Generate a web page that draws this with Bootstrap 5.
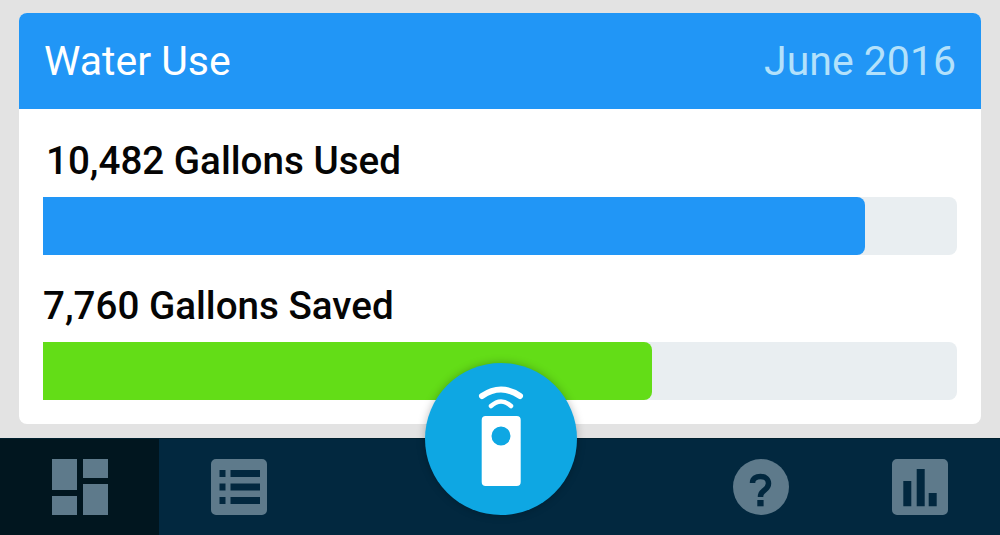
<!DOCTYPE html>
<html lang="en">
<head>
<meta charset="UTF-8">
<title>Water Use</title>
<link href="https://cdn.jsdelivr.net/npm/bootstrap@5.3.0/dist/css/bootstrap.min.css" rel="stylesheet">
<style>
  html, body { height: 100%; }
  body {
    background: #e3e3e3;
    font-family: Roboto, "Liberation Sans", sans-serif;
    overflow: hidden;
  }
  .app-screen { height: 535px; }
  .content-area { padding: 13px 19px 14px; }
  .usage-card { border: 0; border-radius: 8px; height: 411px; overflow: hidden; }
  .usage-head {
    background: #2196f6;
    height: 96px;
    padding: 0 25px;
    font-size: 41px;
    line-height: 96px;
    border: 0;
    border-radius: 0;
  }
  .usage-month { color: #b3e1fb; }
  .usage-body { padding: 28px 24px 0; }
  .usage-label { font-size: 38.6px; font-weight: 500; line-height: 48px; color: #050505; margin-bottom: 12px; }
  .label-first { padding-left: 3px; }
  .usage-track { height: 58px; background: #e9eef1; border-radius: 0 8px 8px 0; margin-bottom: 27px; }
  .usage-fill { border-radius: 0 8px 8px 0; }
  .fill-blue { background: #2196f6; }
  .fill-green { background: #63dd17; }
  .tab-bar { height: 97px; background: #02283f; border-top: 1px solid #01202f; }
  .tab-item { width: 159px; padding-bottom: 1px; }
  .tab-item.is-active { background: #01161f; }
  .tab-item svg { width: 56px; height: 56px; fill: #5e7a8b; }
  .tab-group-end { margin-right: 1px; }
  .remote-btn {
    left: 425px;
    top: 363px;
    width: 152px;
    height: 152px;
    background: #0ea7e3;
    box-shadow: 0 0 8px rgba(0, 0, 0, .25);
  }
</style>
</head>
<body>
<div class="app-screen position-relative d-flex flex-column">
  <div class="content-area">
    <div class="card usage-card">
      <div class="card-header usage-head d-flex justify-content-between text-white">
        <span>Water Use</span>
        <span class="usage-month">June 2016</span>
      </div>
      <div class="usage-body">
        <div class="usage-label label-first">10,482 Gallons Used</div>
        <div class="progress usage-track">
          <div class="progress-bar usage-fill fill-blue" style="width: 89.9%"></div>
        </div>
        <div class="usage-label">7,760 Gallons Saved</div>
        <div class="progress usage-track">
          <div class="progress-bar usage-fill fill-green" style="width: 66.6%"></div>
        </div>
      </div>
    </div>
  </div>
  <nav class="tab-bar d-flex justify-content-between">
    <div class="d-flex">
      <a class="tab-item is-active d-flex align-items-center justify-content-center" href="#">
        <svg viewBox="0 0 56 56"><rect x="0" y="0" width="25" height="31"/><rect x="31" y="0" width="25" height="19"/><rect x="31" y="25" width="25" height="31"/><rect x="0" y="37" width="25" height="19"/></svg>
      </a>
      <a class="tab-item d-flex align-items-center justify-content-center" href="#">
        <svg viewBox="0 0 56 56"><path fill-rule="evenodd" d="M5 0H51A5 5 0 0 1 56 5V51A5 5 0 0 1 51 56H5A5 5 0 0 1 0 51V5A5 5 0 0 1 5 0ZM8.500 11V18H14.500V11ZM19.500 11V18H49V11ZM8.500 24.500V31.500H14.500V24.500ZM19.500 24.500V31.500H49V24.500ZM8.500 38V45H14.500V38ZM19.500 38V45H49V38Z"/></svg>
      </a>
    </div>
    <div class="d-flex tab-group-end">
      <a class="tab-item d-flex align-items-center justify-content-center" href="#">
        <svg viewBox="0 0 56 56">
          <circle cx="28" cy="28" r="28"/>
          <path d="M19.500 24C19.500 19.500 23 17.500 27.500 17.500C32.500 17.500 35.500 20.500 35.500 24.500C35.500 29 32 30.500 30 32.500C28 34 27.500 35.500 27.500 38" fill="none" stroke="#02283f" stroke-width="5.500"/>
          <rect x="24.300" y="41" width="6.300" height="6.300" fill="#02283f"/>
        </svg>
      </a>
      <a class="tab-item d-flex align-items-center justify-content-center" href="#">
        <svg viewBox="0 0 56 56"><path fill-rule="evenodd" d="M5 0H51A5 5 0 0 1 56 5V51A5 5 0 0 1 51 56H5A5 5 0 0 1 0 51V5A5 5 0 0 1 5 0ZM11.300 22V47.300H19.300V22ZM24.700 10V47.300H32.700V10ZM36.700 34V47.300H44.700V34Z"/></svg>
      </a>
    </div>
  </nav>
  <button type="button" class="remote-btn btn position-absolute rounded-circle border-0 p-0 d-flex align-items-center justify-content-center">
    <svg width="152" height="152" viewBox="0 0 152 152">
      <path d="M57 33Q76 20 95 33" fill="none" stroke="#fff" stroke-width="6" stroke-linecap="round"/>
      <path d="M66 43Q76 34 86 43" fill="none" stroke="#fff" stroke-width="4.500" stroke-linecap="round"/>
      <path fill="#fff" fill-rule="evenodd" d="M60.700 53H91.700A4 4 0 0 1 95.700 57V119A4 4 0 0 1 91.700 123H60.700A4 4 0 0 1 56.700 119V57A4 4 0 0 1 60.700 53ZM76 63.500A9.500 9.500 0 1 0 76 82.500A9.500 9.500 0 1 0 76 63.500Z"/>
    </svg>
  </button>
</div>
<script src="https://cdn.jsdelivr.net/npm/bootstrap@5.3.0/dist/js/bootstrap.bundle.min.js"></script>
</body>
</html>
